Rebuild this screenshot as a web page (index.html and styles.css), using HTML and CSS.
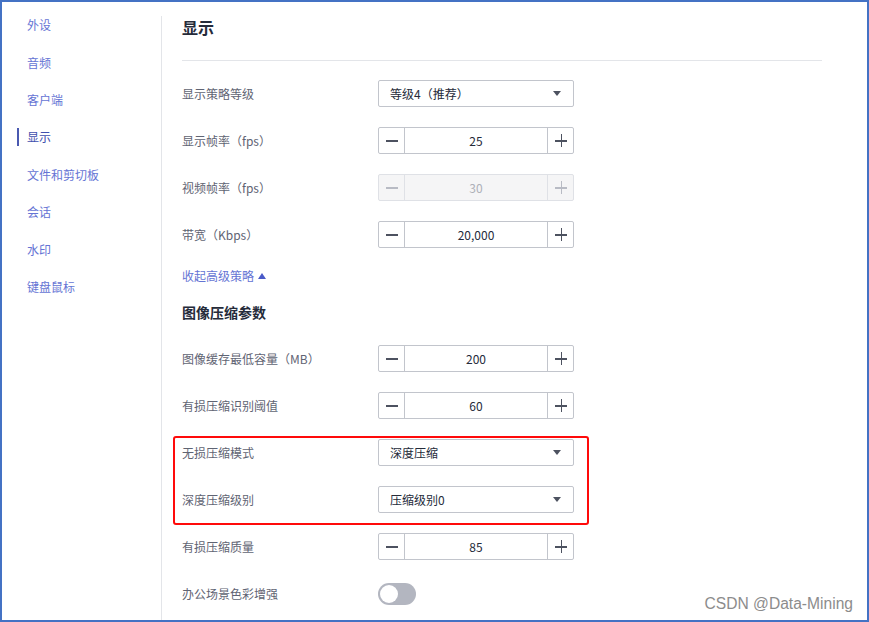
FILE: index.html
```html
<!DOCTYPE html>
<html lang="zh-CN">
<head>
    <meta charset="UTF-8">
    <meta name="viewport" content="width=device-width, initial-scale=1.0">
    <title>显示设置</title>
    <link rel="stylesheet" href="styles.css">
</head>
<body>

<div class="frame">
    <aside class="sidebar">
        <ul class="nav">
            <li>外设</li>
            <li>音频</li>
            <li>客户端</li>
            <li class="active">显示</li>
            <li>文件和剪切板</li>
            <li>会话</li>
            <li>水印</li>
            <li>键盘鼠标</li>
        </ul>
    </aside>

    <main class="panel">
        <h1 class="panel-title">显示</h1>

        <div class="form">
            <div class="row">
                <span class="field-label">显示策略等级</span>
                <div class="select"><span>等级4（推荐）</span><i class="caret"></i></div>
            </div>
            <div class="row">
                <span class="field-label">显示帧率（fps）</span>
                <div class="stepper"><span class="step minus"></span><span class="value">25</span><span class="step plus"></span></div>
            </div>
            <div class="row">
                <span class="field-label">视频帧率（fps）</span>
                <div class="stepper disabled"><span class="step minus"></span><span class="value">30</span><span class="step plus"></span></div>
            </div>
            <div class="row">
                <span class="field-label">带宽（Kbps）</span>
                <div class="stepper"><span class="step minus"></span><span class="value">20,000</span><span class="step plus"></span></div>
            </div>

            <div class="toggle-link">收起高级策略 <i class="up"></i></div>
            <h2 class="section-title">图像压缩参数</h2>

            <div class="row">
                <span class="field-label">图像缓存最低容量（MB）</span>
                <div class="stepper"><span class="step minus"></span><span class="value">200</span><span class="step plus"></span></div>
            </div>
            <div class="row">
                <span class="field-label">有损压缩识别阈值</span>
                <div class="stepper"><span class="step minus"></span><span class="value">60</span><span class="step plus"></span></div>
            </div>

            <div class="highlight">
                <div class="row">
                    <span class="field-label">无损压缩模式</span>
                    <div class="select"><span>深度压缩</span><i class="caret"></i></div>
                </div>
                <div class="row">
                    <span class="field-label">深度压缩级别</span>
                    <div class="select"><span>压缩级别0</span><i class="caret"></i></div>
                </div>
            </div>

            <div class="row">
                <span class="field-label">有损压缩质量</span>
                <div class="stepper"><span class="step minus"></span><span class="value">85</span><span class="step plus"></span></div>
            </div>
            <div class="row">
                <span class="field-label">办公场景色彩增强</span>
                <div class="switch"><span class="knob"></span></div>
            </div>
        </div>
    </main>

    <div class="watermark">CSDN @Data-Mining</div>
</div>

</body>
</html>
```

FILE: styles.css
```css
body {
    margin: 0;
    font-family: "Noto Sans CJK SC", "Liberation Sans", sans-serif;
    background-color: #fff;
}
.frame {
    position: relative;
    width: 869px;
    height: 622px;
    box-sizing: border-box;
    border: 2px solid #4472c4;
    display: flex;
    overflow: hidden;
}
.sidebar {
    width: 159px;
    flex-shrink: 0;
    padding-top: 4px;
}
.nav {
    list-style: none;
    margin: 0;
    padding: 0;
}
.nav li {
    position: relative;
    height: 37.4px;
    display: flex;
    align-items: center;
    padding-left: 25px;
    font-size: 12px;
    color: #6574d4;
}
.nav li.active {
    color: #3f4fae;
}
.nav li.active::before {
    content: "";
    position: absolute;
    left: 15px;
    top: 10px;
    width: 2px;
    height: 18px;
    background-color: #4a59b0;
}
.panel {
    flex: 1;
    margin-top: 14px;
    border-left: 1px solid #e3e5e9;
    padding: 0 45px 0 20px;
}
.panel-title {
    margin: 0;
    font-size: 16px;
    line-height: 22px;
    font-weight: bold;
    color: #252b3a;
    padding-bottom: 22px;
    border-bottom: 1px solid #e3e5e9;
}
.form {
    padding-top: 19px;
}
.row {
    display: flex;
    align-items: center;
    height: 27px;
    margin-bottom: 20px;
}
.field-label {
    width: 196px;
    font-size: 12px;
    color: #5f6473;
}
.select {
    width: 196px;
    height: 27px;
    box-sizing: border-box;
    border: 1px solid #c2c5cc;
    border-radius: 2px;
    padding: 0 12px 0 11px;
    display: flex;
    align-items: center;
    justify-content: space-between;
    font-size: 12px;
    color: #252b3a;
}
.caret {
    width: 0;
    height: 0;
    border-left: 4px solid transparent;
    border-right: 4px solid transparent;
    border-top: 5px solid #4d5260;
}
.stepper {
    width: 196px;
    height: 27px;
    box-sizing: border-box;
    border: 1px solid #c2c5cc;
    border-radius: 2px;
    display: flex;
}
.step {
    position: relative;
    width: 25px;
    flex-shrink: 0;
}
.step.minus {
    border-right: 1px solid #c2c5cc;
}
.step.plus {
    border-left: 1px solid #c2c5cc;
}
.step::before,
.step.plus::after {
    content: "";
    position: absolute;
    left: 7px;
    top: 12px;
    width: 12px;
    height: 1.5px;
    background-color: #4d5260;
}
.step.plus::after {
    left: 12.5px;
    top: 6px;
    width: 1.5px;
    height: 13px;
}
.value {
    flex: 1;
    display: flex;
    align-items: center;
    justify-content: center;
    font-size: 12px;
    color: #252b3a;
}
.stepper.disabled {
    background-color: #f5f5f6;
    border-color: #dfe1e6;
}
.stepper.disabled .step {
    border-color: #dfe1e6;
}
.stepper.disabled .step::before,
.stepper.disabled .step::after {
    background-color: #b8bbc4;
}
.stepper.disabled .value {
    color: #adb0b8;
}
.toggle-link {
    font-size: 12px;
    line-height: 16px;
    color: #6574d4;
    margin-bottom: 20px;
    display: flex;
    align-items: center;
    gap: 4px;
}
.up {
    width: 0;
    height: 0;
    border-left: 4px solid transparent;
    border-right: 4px solid transparent;
    border-bottom: 6px solid #4a5ac8;
}
.section-title {
    margin: 0 0 25px;
    font-size: 14px;
    line-height: 16px;
    font-weight: bold;
    color: #252b3a;
}
.highlight {
    width: max-content;
    margin: -3px 0 8px -9px;
    padding: 1px 13px 10px 7px;
    border: 2px solid #ff0a0a;
    border-radius: 3px;
}
.highlight .row:last-child {
    margin-bottom: 0;
}
.switch {
    position: relative;
    width: 38px;
    height: 22px;
    border-radius: 11px;
    background-color: #b3b6c0;
}
.knob {
    position: absolute;
    left: 2px;
    top: 2px;
    width: 18px;
    height: 18px;
    border-radius: 50%;
    background-color: #fff;
}
.watermark {
    position: absolute;
    right: 14px;
    bottom: 7px;
    font-family: "Liberation Sans", sans-serif;
    font-size: 15.6px;
    line-height: 18px;
    color: #8c8c8c;
}
```
